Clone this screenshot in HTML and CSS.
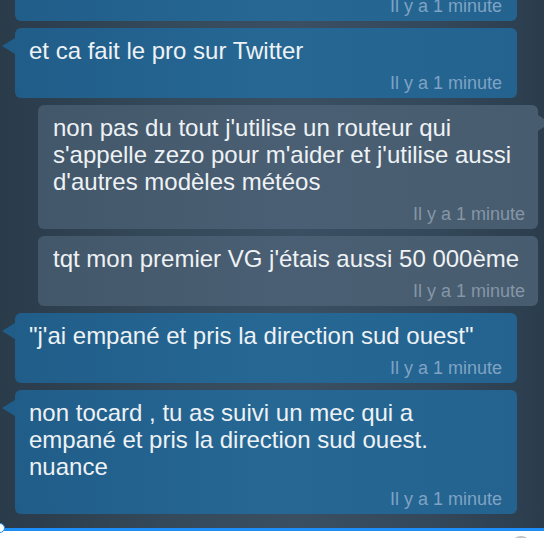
FILE: index.html
```html
<!DOCTYPE html>
<html lang="fr">
<head>
    <meta charset="UTF-8">
    <meta name="viewport" content="width=device-width, initial-scale=1.0">
    <title>Discussion</title>
    <link rel="stylesheet" href="styles.css">
</head>
<body>

    <div class="thread">
        <div class="bubble them no-tail">
            <div class="meta">Il y a 1 minute</div>
        </div>

        <div class="bubble them">
            <p class="text">et ca fait le pro sur Twitter</p>
            <div class="meta">Il y a 1 minute</div>
        </div>

        <div class="bubble me">
            <p class="text">non pas du tout j'utilise un routeur qui s'appelle zezo pour m'aider et j'utilise aussi d'autres modèles météos</p>
            <div class="meta">Il y a 1 minute</div>
        </div>

        <div class="bubble me no-tail">
            <p class="text">tqt mon premier VG j'étais aussi 50 000ème</p>
            <div class="meta">Il y a 1 minute</div>
        </div>

        <div class="bubble them">
            <p class="text">"j'ai empané et pris la direction sud ouest"</p>
            <div class="meta">Il y a 1 minute</div>
        </div>

        <div class="bubble them">
            <p class="text">non tocard , tu as suivi un mec qui a empané et pris la direction sud ouest. nuance</p>
            <div class="meta">Il y a 1 minute</div>
        </div>
    </div>

    <div class="composer">
        <span class="knob"></span>
        <span class="send"></span>
    </div>

</body>
</html>
```

FILE: styles.css
```css
body {
    font-family: "Liberation Sans", Arial, sans-serif;
    margin: 0;
    height: 100vh;
    display: flex;
    flex-direction: column;
    overflow: hidden;
    background-color: #ffffff;
}
.thread {
    flex: 1;
    display: flex;
    flex-direction: column;
    justify-content: flex-end;
    gap: 7px;
    padding-bottom: 14px;
    overflow: hidden;
    background: linear-gradient(90deg, #2a3b4a 0%, #34495a 30%, #3a5062 55%, #33485a 80%, #2b3d4d 100%);
}
.bubble {
    position: relative;
    flex-shrink: 0;
    border-radius: 6px;
    padding: 9px 15px 5px 14px;
    color: #eef2f5;
}
.bubble.them {
    margin: 0 27px 0 15px;
    background: linear-gradient(90deg, #215d89 0%, #266794 50%, #246390 100%);
}
.bubble.me {
    margin: 0 6px 0 38px;
    padding-left: 15px;
    padding-right: 13px;
    background: linear-gradient(90deg, #43576a 0%, #4a5f73 50%, #485c6f 100%);
}
/* little arrows */
.bubble.them::before {
    content: "";
    position: absolute;
    left: -13px;
    top: 10px;
    border-top: 8px solid transparent;
    border-bottom: 8px solid transparent;
    border-right: 13px solid #215d89;
}
.bubble.me::after {
    content: "";
    position: absolute;
    right: -12px;
    top: 10px;
    border-top: 8px solid transparent;
    border-bottom: 8px solid transparent;
    border-left: 12px solid #485c6f;
}
.bubble.no-tail::before,
.bubble.no-tail::after {
    display: none;
}
.text {
    margin: 0 0 9px 0;
    font-size: 24px;
    line-height: 27px;
}
.meta {
    text-align: right;
    font-size: 18px;
    line-height: 20px;
    color: #7fa3c3;
}
.me .meta {
    color: #8596a6;
}
.composer {
    position: relative;
    height: 7px;
    border-top: 3px solid #1c8ef6;
    display: flex;
    justify-content: flex-end;
    padding-right: 12px;
}
.send {
    width: 22px;
    height: 22px;
    margin-top: 5px;
    border-radius: 50%;
    border-top: 2px solid #c4c4c4;
    box-sizing: border-box;
}
.knob {
    position: absolute;
    left: -5px;
    top: -8px;
    width: 8px;
    height: 8px;
    border-radius: 50%;
    background-color: #ffffff;
    border: 1px solid #1c8ef6;
}
```
